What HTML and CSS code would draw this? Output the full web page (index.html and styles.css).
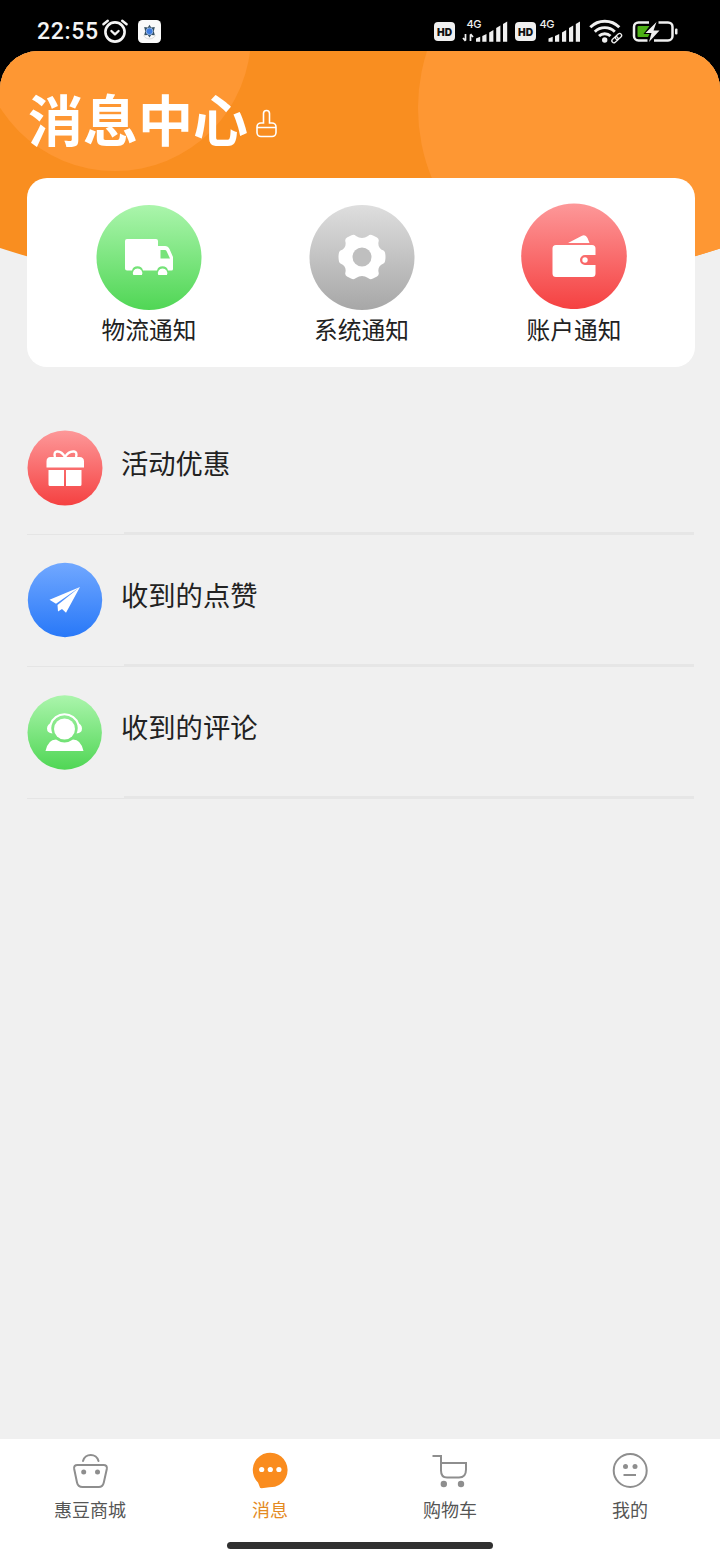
FILE: index.html
```html
<!DOCTYPE html>
<html lang="zh-CN">
<head>
<meta charset="utf-8">
<title>消息中心</title>
<link rel="stylesheet" href="styles.css">
</head>
<body>
<div class="phone">
  <div class="status">
    <div class="status-left">
      <span class="time">22:55</span>
      <svg class="alarm" width="28" height="26" viewBox="0 0 28 26" fill="none" stroke="#f4f4f4" stroke-linecap="round">
        <circle cx="14" cy="14" r="9.6" stroke-width="2.6"/>
        <path d="M10.4 13l3.6 3.3 3.6-3.3" stroke-width="2.3" stroke-linejoin="round"/>
        <path d="M2.4 6.2L6.8 2.7M25.6 6.2L21.2 2.7" stroke-width="2.4"/>
      </svg>
      <svg width="23" height="23" viewBox="0 0 23 23">
        <rect width="23" height="23" rx="4.5" fill="#fafafa"/>
        <path d="M5.500 15.500a7 7 0 0 0 12 0" fill="none" stroke="#ddd"/>
        <path d="M11.500 4.800l1.700 2.700 3.600-.5-1 4.300 1 4-3.600-.4-1.700 2.700-1.700-2.700-3.600.4 1-4-1-4.300 3.600.5z" fill="#355064"/>
        <circle cx="11.500" cy="11.300" r="3.400" fill="#3e7ce0" stroke="#a9c4ea" stroke-width=".8"/>
      </svg>
    </div>
    <svg class="signals" width="246" height="28" viewBox="434 16 246 28" fill="#f0f0f0">
      <rect x="434" y="22" width="21" height="19" rx="4"/>
      <text class="hd" x="437" y="35.600" textLength="15" lengthAdjust="spacingAndGlyphs">HD</text>
      <text class="net" x="466.500" y="28" textLength="15">4G</text>
      <path d="M465.500 34v6.500M463 38l2.500 3M470.500 41v-6.500M473 37l-2.500-3" stroke="#f0f0f0" stroke-width="1.700" fill="none"/>
      <path d="M476 38.500l4.200-1.800v5H476zM482.300 36l4.200-2v7.700h-4.200zM489.200 32.500l4.200-2.500v11.700h-4.200zM496.200 28l4.200-2.500v16.200h-4.200zM503 24l4.200-2.500v20.200H503z"/>
      <rect x="515" y="22" width="21" height="19" rx="4"/>
      <text class="hd" x="518" y="35.600" textLength="15" lengthAdjust="spacingAndGlyphs">HD</text>
      <text class="net" x="539.500" y="28" textLength="15">4G</text>
      <path d="M548.500 38.500l4.200-1.800v5h-4.200zM555 36l4.200-2v7.700H555zM562 32.500l4.200-2.500v11.700H562zM569 28l4.200-2.500v16.200H569zM575.800 24l4.200-2.500v20.200h-4.200z"/>
      <g fill="none" stroke="#f0f0f0" stroke-width="2.900">
        <path d="M590.300 27.300a20.500 20.500 0 0 1 29 0"/>
        <path d="M594.800 31.700a14.300 14.300 0 0 1 20 0"/>
        <path d="M599 36a8.300 8.300 0 0 1 11.500 0"/>
      </g>
      <circle cx="604.700" cy="40" r="2.700"/>
      <g fill="none" stroke="#f0f0f0" stroke-width="1.300">
        <rect x="-3.500" y="-2" width="7" height="4" rx="2" transform="translate(615 39.700) rotate(-42)"/>
        <rect x="-3.500" y="-2" width="7" height="4" rx="2" transform="translate(618.500 36.500) rotate(-42)"/>
      </g>
      <path d="M649 22.400h-10.500a4.500 4.500 0 0 0-4.500 4.500v9a4.500 4.500 0 0 0 4.500 4.500h9M658.500 22.400H668a4.500 4.500 0 0 1 4.500 4.500v9a4.500 4.500 0 0 1-4.500 4.500H654" fill="none" stroke="#f0f0f0" stroke-width="2.500"/>
      <path d="M638.500 26h11l-6 8h6l-1.500 3h-9.500a1 1 0 0 1-1-1v-9a1 1 0 0 1 1-1z" fill="#4caf15"/>
      <path d="M656.500 22l-11 11h6l-2.500 9 10.500-11.500h-6z"/>
      <rect x="675" y="28.500" width="2.500" height="6" rx="1"/>
    </svg>
  </div>

  <main class="screen">
    <svg class="backdrop" width="720" height="260" viewBox="0 0 720 260">
      <defs><clipPath id="curve"><path d="M0 0H720V197.500Q360 313 0 197Z"/></clipPath></defs>
      <g clip-path="url(#curve)">
        <rect width="720" height="260" fill="#f98e20"/>
        <circle cx="115" cy="-16" r="136" fill="#fe9733"/>
        <circle cx="603" cy="57" r="185" fill="#fe9733"/>
      </g>
    </svg>
    <header class="heading">
      <h1>消息中心</h1>
      <svg width="22" height="30" viewBox="0 0 22 30" fill="none" stroke="#fff" stroke-width="1.600">
        <path d="M7.500 14V4.500a3 3 0 0 1 6 0V14H16a4 4 0 0 1 4 4v5.500a4 4 0 0 1-4 4H5a4 4 0 0 1-4-4V18a4 4 0 0 1 4-4zM1 18.500h19"/>
      </svg>
    </header>

    <section class="notices">
      <a class="notice">
        <svg width="106" height="106" viewBox="0 0 106 106">
          <defs><linearGradient id="green" x2="0" y2="1"><stop stop-color="#abf5ac"/><stop offset="1" stop-color="#50d655"/></linearGradient></defs>
          <circle cx="53" cy="53.500" r="52.500" fill="url(#green)"/>
          <path d="M31 35h29a2 2 0 0 1 2 2v5h7q3 0 4.500 3l3.500 8v12a1.500 1.500 0 0 1-1.500 1.500H72a5.700 5.700 0 0 0-11 0H47a5.700 5.700 0 0 0-11 0h-5a2 2 0 0 1-2-2V37a2 2 0 0 1 2-2z" fill="#fff"/>
          <path d="M64.500 46h4.500q1 0 1.500 1l3.500 7.500h-9.500z" fill="#77e37b"/>
          <path d="M37.300 71a4.700 4.700 0 1 1 8.600 0zM62.300 71a4.700 4.700 0 1 1 8.600 0z" fill="#fff"/>
        </svg>
        <span>物流通知</span>
      </a>
      <a class="notice">
        <svg width="106" height="106" viewBox="0 0 106 106">
          <defs><linearGradient id="gray" x2="0" y2="1"><stop stop-color="#dedede"/><stop offset="1" stop-color="#a7a7a7"/></linearGradient></defs>
          <circle cx="53" cy="53.500" r="52.500" fill="url(#gray)"/>
          <path d="M42 31.500q3-1.500 5 .5 6 4 12 0 2-2 5-.5l4 2q2.500 1.500 1.500 4.500-1 6 5 8.500 2 1 2 6.500t-2 6.500q-6 2.500-5 8.500 1 3-1.500 4.500l-4 2q-3 1.500-5-.5-6-4-12 0-2 2-5 .5l-4-2q-2.500-1.500-1.500-4.500 1-6-5-8.500-2-1-2-6.500t2-6.500q6-2.500 5-8.500-1-3 1.500-4.500z" fill="#fff"/>
          <circle cx="53" cy="53" r="9.500" fill="#bfbfbf"/>
        </svg>
        <span>系统通知</span>
      </a>
      <a class="notice">
        <svg class="raised" width="106" height="106" viewBox="0 0 106 106">
          <defs><linearGradient id="red" x2="0" y2="1"><stop stop-color="#fd9899"/><stop offset="1" stop-color="#f54141"/></linearGradient></defs>
          <circle cx="53" cy="53.300" r="52.800" fill="url(#red)"/>
          <path d="M35 42H71q3.500 0 3.500 3.500v6.500H64a5 5 0 0 0 0 10h10.500v8.500q0 3.500-3.500 3.500H35q-3.500 0-3.500-3.500v-25Q31.500 42 35 42zM47 40l13.500-7q4-2 6 2l2 5z" fill="#fff"/>
          <circle cx="64" cy="57" r="2.700" fill="#fff"/>
        </svg>
        <span>账户通知</span>
      </a>
    </section>

    <ul class="list">
      <li class="row">
        <svg width="76" height="76" viewBox="0 0 76 76">
          <circle cx="38" cy="38" r="37.500" fill="url(#red)"/>
          <path d="M23.500 27h29q4.500 0 4.500 4.500v6H19.500v-6q0-4.500 4-4.500zM21.500 40H37v16H23q-1.500 0-1.500-1.500zM39 40h15.500v14.500q0 1.500-1.500 1.500H39z" fill="#fff"/>
          <path d="M38 27q-3.500-6-8-5.500-3.500.5-2 5.500M38 27q3.500-6 9-5.500 3.500.5 2 5.500" fill="none" stroke="#fff" stroke-width="2.400"/>
        </svg>
        <span>活动优惠</span>
      </li>
      <li class="row">
        <svg width="76" height="76" viewBox="0 0 76 76">
          <defs><linearGradient id="blue" x2="0" y2="1"><stop stop-color="#71a8ff"/><stop offset="1" stop-color="#2878f8"/></linearGradient></defs>
          <circle cx="38" cy="38" r="37.200" fill="url(#blue)"/>
          <path d="M53 25L22.500 37.700l6.500 4zM53 25L30.500 43l.5 6.500 4-2.500 4 3.800z" fill="#fff"/>
        </svg>
        <span>收到的点赞</span>
      </li>
      <li class="row">
        <svg width="76" height="76" viewBox="0 0 76 76">
          <circle cx="37.700" cy="38.500" r="37.200" fill="url(#green)"/>
          <circle cx="37.500" cy="35" r="10.500" fill="#fff"/>
          <path d="M23.500 30.500a14.700 14.700 0 0 1 28 0" fill="none" stroke="#fff" stroke-width="2"/>
          <path d="M25.500 28.500q-5.500 1.500-5.500 6t5.500 5q-2.500-5.500 0-11zM49.500 28.500q5.500 1.500 5.500 6t-5.500 5q2.500-5.500 0-11zM29 45.500q8.500 6 17 0 8 0 10.500 11.500h-38Q21 45.500 29 45.500z" fill="#fff"/>
        </svg>
        <span>收到的评论</span>
      </li>
    </ul>
  </main>

  <nav class="tabs">
    <a class="tab">
      <svg width="40" height="40" viewBox="0 0 40 40" fill="none" stroke="#8e8e8e" stroke-width="2">
        <path d="M13 11.500a8 8 0 0 1 15.500 0" stroke-linecap="round" transform="translate(0 -.5)"/>
        <path d="M7.500 15h26q4 0 3.300 4l-3 13.500q-1 4.500-5 4.500H12.500q-4.500 0-5.500-4.500L4.200 19q-.7-4 3.300-4z"/>
        <g fill="#8e8e8e" stroke="none"><circle cx="13.700" cy="22" r="2.500"/><circle cx="27.500" cy="22" r="2.500"/></g>
      </svg>
      <span>惠豆商城</span>
    </a>
    <a class="tab active">
      <svg width="40" height="40" viewBox="0 0 40 40">
        <path d="M8 32.500A17.400 17.400 0 1 1 25 36.800q-5 .2-13.500 1.500-2 0-2-2z" fill="#fa8c1e"/>
        <g fill="#fff"><circle cx="11.700" cy="19.500" r="2.600"/><circle cx="20.300" cy="19.500" r="2.600"/><circle cx="28.900" cy="19.500" r="2.600"/></g>
      </svg>
      <span>消息</span>
    </a>
    <a class="tab">
      <svg width="40" height="40" viewBox="0 0 40 40" fill="none" stroke="#8e8e8e" stroke-width="2">
        <path d="M2.500 6H11v14.500q0 7 6 7h12q7 0 7-8V13H11"/>
        <g fill="#8e8e8e" stroke="none"><circle cx="13.800" cy="34" r="3.200"/><circle cx="31" cy="34" r="3.200"/></g>
      </svg>
      <span>购物车</span>
    </a>
    <a class="tab">
      <svg width="40" height="40" viewBox="0 0 40 40" fill="none" stroke="#8e8e8e" stroke-width="2">
        <circle cx="20.200" cy="20.500" r="16.500"/>
        <path d="M13.500 25h12.500"/>
        <g fill="#8e8e8e" stroke="none"><circle cx="15.500" cy="16.500" r="2.500"/><circle cx="25" cy="16.500" r="2.500"/></g>
      </svg>
      <span>我的</span>
    </a>
  </nav>
  <div class="home"><i class="home-bar"></i></div>
</div>
</body>
</html>
```
FILE: styles.css
```css
* { box-sizing: border-box; }
body { margin: 0; background: #000; }
.phone {
  display: flex;
  flex-direction: column;
  width: 720px;
  height: 1560px;
  overflow: hidden;
  font-family: "Noto Sans CJK SC", sans-serif;
  color: #222;
}
.status {
  flex: none;
  display: flex;
  justify-content: space-between;
  height: 51px;
  padding: 16px 40px 0 37px;
  background: #000;
}
.status-left { display: flex; align-items: center; height: 30px; }
.time {
  width: 64px;
  padding-top: 1px;
  color: #f4f4f4;
  font: 500 23px/30px Roboto, sans-serif;
  letter-spacing: .7px;
}
.alarm { margin-right: 9px; }
.hd { font: 900 11px Inter, sans-serif; fill: #111; }
.net { font: 500 11px Inter, sans-serif; }
.screen {
  position: relative;
  flex: 1;
  overflow: hidden;
  border-radius: 38px 38px 0 0;
  background: #f0f0f0;
}
.backdrop { position: absolute; top: 0; left: 0; }
.heading {
  position: relative;
  display: flex;
  align-items: flex-start;
  gap: 8px;
  height: 127px;
  padding: 26px 28px 0;
}
.heading h1 {
  margin: 0;
  color: #fff;
  font-size: 55px;
  line-height: 80px;
  font-weight: 700;
}
.heading svg { margin-top: 32px; }
.notices {
  position: relative;
  display: flex;
  justify-content: space-between;
  width: 668px;
  height: 189px;
  margin-left: 27px;
  padding: 26px 68px 0 69px;
  border-radius: 20px;
  background: #fff;
}
.notice { display: flex; flex-direction: column; align-items: center; width: 106px; }
.notice svg { display: block; flex: none; }
.notice .raised { margin-top: -1px; margin-bottom: 1px; }
.notice span { margin-top: -1px; font-size: 23.7px; line-height: 40px; white-space: nowrap; }
.list { margin: 36px 0 0; padding: 0 26px 0 27px; list-style: none; }
.row {
  display: flex;
  align-items: flex-start;
  gap: 18px;
  height: 132px;
  padding-top: 27px;
  background:
    linear-gradient(#e6e6e6, #e6e6e6) 97px 129px / 570px 3px no-repeat,
    linear-gradient(#e5e5e5, #e5e5e5) 0 131px / 97px 1px no-repeat;
}
.row svg { flex: none; }
.row span { font-size: 27.3px; line-height: 40px; margin-top: 12px; }
.tabs {
  flex: none;
  display: flex;
  height: 94px;
  padding-top: 11px;
  background: #fff;
}
.tab {
  display: flex;
  flex: 1;
  flex-direction: column;
  align-items: center;
  font-size: 18px;
  line-height: 26px;
  color: #555;
}
.tab span { margin-top: 6px; }
.tab.active { color: #e48a22; }
.home {
  flex: none;
  display: flex;
  justify-content: center;
  height: 27px;
  padding-top: 9px;
  background: #fff;
}
.home-bar { width: 266px; height: 7px; border-radius: 4px; background: #303030; }
```
